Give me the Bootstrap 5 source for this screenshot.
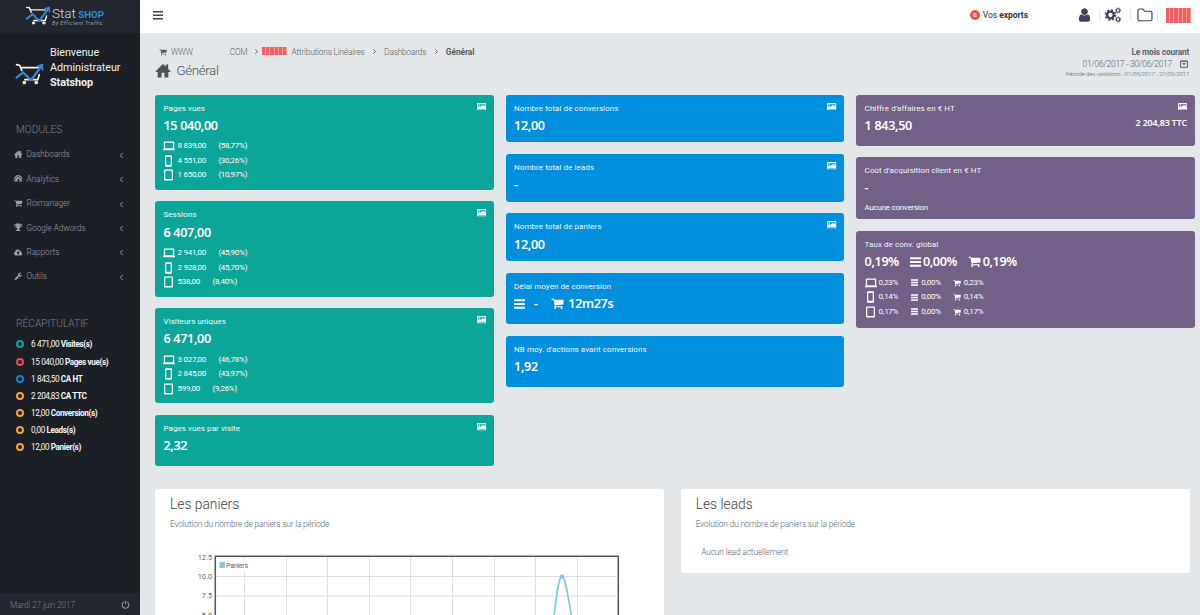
<!DOCTYPE html>
<html lang="fr">
<head>
<meta charset="utf-8">
<meta name="viewport" content="width=device-width, initial-scale=1">
<title>StatShop - Général</title>
<link href="https://cdn.jsdelivr.net/npm/bootstrap@5.3.0/dist/css/bootstrap.min.css" rel="stylesheet">
<style>
body{font-family:Roboto,"Liberation Sans",sans-serif;font-size:8px;line-height:12px;background:#e4e7ea;color:#58666e;height:615px;overflow:hidden}
svg{display:block;flex:none;fill:currentColor}
.shell{height:615px}
/* sidebar */
.side{width:140.3px;background:#1c1f26;color:#8b91a0;flex:none}
.brand{height:33px;background:#22262f;padding:6px 0 0 25px}
.brand-name{color:#d8dade;font-size:13.5px;line-height:14px;font-weight:300;margin-left:1px}
.brand-name b{color:#3788d0;font-size:9.7px;font-weight:700;margin-left:-1px}
.brand-tag{font-size:5.6px;line-height:5px;font-style:italic;color:#9a9ea4;letter-spacing:.34px;margin-left:1px;margin-top:-1px}
.welcome{height:90px;padding:12px 0 0 15px;color:#eef0f2;font-size:10.8px;line-height:15px}
.welcome>div{margin-left:6px;letter-spacing:-.05px}
.side-title{font-size:10.2px;line-height:14px;font-weight:300;color:#7d828d;padding-left:16px}
.recap-title{margin-top:28.3px;margin-bottom:5px}
.modules{margin-top:5px}
.side-link{height:24.45px;padding:0 16px 0 14px;color:#969cab;font-size:8.3px;letter-spacing:-.08px;text-decoration:none}
.side-link .txt{margin-left:4px}
.side-link svg:last-child{margin-top:2px}
.recap{height:17.1px;padding-left:15.600px;color:#f4f5f6;font-size:8.2px;letter-spacing:-.4px}
.ring{width:8px;height:8px;border:2px solid;border-radius:50%;margin-right:7.5px}
.side-foot{height:22px;background:#22262f;color:#7d8493;font-size:8.3px;letter-spacing:-.13px;padding:1px 10.500px 0 10px}
/* top bar */
.topbar{height:33px;background:#fff;color:#3c4456;padding:0 9px 3px 13px}
.exports{font-size:8.5px;color:#333;margin-right:50px;letter-spacing:-.03px}
.pill{width:10.5px;height:10.5px;border-radius:50%;background:#ee4f52;color:#fff;font-size:6px;line-height:10.5px;text-align:center;margin-right:2.5px;font-weight:700}
.vsep{width:1px;height:10px;background:#e4e6e8}
.hatch{background:repeating-linear-gradient(90deg,#f15f60 0 3.2px,#f79a98 3.2px 4.2px)}
.hatch-lg{width:25px;height:15px}
.hatch-sm{width:25px;height:8px;margin-bottom:2px}
.folder{margin-left:6px}
/* page head */
.page{padding:0 5px 0 14.7px}
.page-head{height:61.7px}
.crumbs{height:12px;font-size:8.3px;color:#555d64;font-weight:300;margin-top:8.700px;letter-spacing:-.17px}
.c-www{width:57px}.c-com{width:20px}.c-arrow{margin:0 3.500px 0 6px}.c-wide{margin:0 7px 0 7.5px}
.crumbs b{font-weight:700;letter-spacing:-.02px}
.heading{font-size:13.4px;line-height:18px;font-weight:300;color:#4c5257;margin-top:4px;letter-spacing:-.4px}
.heading svg{margin-right:5.500px}
.period{font-size:8.4px;text-align:right;padding:12.8px 6px 0 0;letter-spacing:-.02px}
.period .fw-bold{letter-spacing:-.18px;margin-right:-.18px}
.p-dates{font-weight:300;letter-spacing:-.2px}
.p-dates svg{margin:0 1px 0 8px}
.p-var{font-size:6px;font-weight:300;line-height:9px;letter-spacing:-.13px;margin-top:-1px}
/* indicators */
.cols{gap:11.7px}
.kpi-col{gap:11.6px;flex:1 1 0}
.kpi{color:#fff;border-radius:3px;padding:8px 8px 0 8.500px;position:relative}
.teal{background:#0ca698}.blue{background:#008fdc}.plum{background:#736086}
.kpi-label{font-size:8px;line-height:12.5px;letter-spacing:.07px;opacity:.95}
.kpi-value{font:600 12.6px/17px "Open Sans","Noto Sans",sans-serif;margin-top:1.700px;height:17px;letter-spacing:-.33px;-webkit-text-stroke:.1px #fff}
.kpi-rows{margin-top:5.2px;font-size:8px;letter-spacing:-.27px}
.kpi-rows>div{height:14.5px}
.dev{width:14px}
.dev-phone{padding-left:2px}
.dev-tablet{padding-left:1px}
.pct{margin-left:12.500px}
.pict{position:absolute;right:7.500px;top:8px}
.dash{margin:0 13.500px 0 9px}
.ttc{font-size:8.8px;position:relative;top:-2px;letter-spacing:-.1px}
.note{font-size:7.9px;letter-spacing:-.22px;margin-top:5.5px}
.g1{margin:0 2px 0 11px}.g2{margin:0 2px 0 10.500px}.cv1{margin:0 3px 0 12.500px}.cv2{margin:0 3px 0 12px}
/* panels */
.panels{padding:0 0 0 14.7px;gap:16.7px;margin-top:23px}
.panel{width:509px;background:#fff;border-radius:3px;padding:6.5px 15px}
.panel h2{font-size:13.8px;line-height:16px;font-weight:300;color:#444;margin:0}
.panel p{font-size:8.35px;font-weight:300;line-height:12px;margin:6px 0 0;letter-spacing:-.16px}
.panel .empty-note{margin:16.5px 0 0 5.5px;letter-spacing:-.13px}
.p-left{height:130px}.p-right{height:83.5px}
.graph{margin-top:9.500px}
</style>
</head>
<body>
<svg class="d-none">
<symbol id="cart" viewBox="0 0 1792 1792"><path d="M704 1536q0 52-38 90t-90 38-90-38-38-90 38-90 90-38 90 38 38 90zm896 0q0 52-38 90t-90 38-90-38-38-90 38-90 90-38 90 38 38 90zm128-1088v512q0 24-16.5 42.5t-40.5 21.5l-1044 122q13 60 13 70 0 16-24 64h920q26 0 45 19t19 45-19 45-45 19h-1024q-26 0-45-19t-19-45q0-11 8-31.5t16-36 21.5-40 15.5-29.5l-177-823h-204q-26 0-45-19t-19-45 19-45 45-19h256q16 0 28.5 6.5t19.5 15.5 13 24.5 8 26 5.5 29.5 4.5 26h1201q26 0 45 19t19 45z"/></symbol>
<symbol id="wrench" viewBox="0 0 1792 1792"><path d="M448 1472q0-26-19-45t-45-19-45 19-19 45 19 45 45 19 45-19 19-45zm644-420l-682 682q-37 37-90 37-52 0-91-37l-106-108q-38-36-38-90 0-53 38-91l681-681q39 98 114.5 173.5t173.5 114.5zm634-435q0 39-23 106-47 134-164.5 217.5t-258.5 83.5q-185 0-316.5-131.5t-131.5-316.5 131.5-316.5 316.5-131.5q58 0 121.5 16.5t107.5 46.5q16 11 16 28t-16 28l-293 169v224l193 107q5-3 79-48.5t135.5-81 70.5-35.5q15 0 23.5 10t8.5 25z"/></symbol>
<symbol id="user" viewBox="200 100 1392 1600"><path d="M1536 1399q0 109-62.5 187t-150.5 78h-854q-88 0-150.5-78t-62.5-187q0-85 8.5-160.5t31.5-152 58.5-131 94-89 134.5-34.5q131 128 313 128t313-128q76 0 134.5 34.5t94 89 58.5 131 31.5 152 8.500 160.5zm-256-887q0 159-112.5 271.5t-271.5 112.5-271.5-112.5-112.5-271.5 112.5-271.5 271.5-112.5 271.5 112.5 112.5 271.5z"/></symbol>
<symbol id="home" viewBox="0 0 16 16"><path d="M8 1 0 8.800l.6.8H2.300V15.500h4.200V10.500h3v5h4.200V9.600h1.700l.6-.8-2.500-2.500V1.500h-2.500v2.300z"/></symbol>
<symbol id="tacho" viewBox="0 0 16 16"><path fill-rule="evenodd" d="M8 2a8 8 0 0 0-8 8c0 1.600.5 3 1.200 4.200h13.600A8 8 0 0 0 8 2zM8 3.300a1.200 1.200 0 1 1 0 2.400 1.200 1.200 0 0 1 0-2.400zM4 5a1.200 1.200 0 1 1 0 2.400A1.200 1.200 0 0 1 4 5zm8 0a1.200 1.200 0 1 1 0 2.400A1.200 1.200 0 0 1 12 5zM2.300 9a1.200 1.200 0 1 1 0 2.400 1.200 1.200 0 0 1 0-2.400zm11.400 0a1.200 1.200 0 1 1 0 2.400 1.200 1.200 0 0 1 0-2.400zM9.300 6.500l1 .3-.9 3.600a1.900 1.900 0 1 1-1-.3z"/></symbol>
<symbol id="trophy" viewBox="0 0 16 16"><path fill-rule="evenodd" d="M4 1h8v1.500h3.500V5c0 2-2 3.500-4.300 3.800-.7.900-1.500 1.200-1.700 2.400 0 1 .8 1.300 2.500 1.800v2H4v-2c1.700-.5 2.500-.8 2.500-1.800-.2-1.200-1-1.500-1.700-2.400C2.500 8.500.5 7 .5 5V2.500H4zM4 4H2v1c0 1 .9 2 2.300 2.400C4 6.400 4 5.200 4 4zm8 0c0 1.200 0 2.400-.3 3.400C13.100 7 14 6 14 5V4z"/></symbol>
<symbol id="cloud" viewBox="0 0 16 16"><path fill-rule="evenodd" d="M3.500 14A3.500 3.500 0 0 1 2 7.300 4.600 4.600 0 0 1 10.500 5 2.500 2.500 0 0 1 13.500 8 3.100 3.100 0 0 1 13 14zM8 6 4.800 9.500h2V12h2.400V9.500h2z"/></symbol>
<symbol id="bars" viewBox="0 0 11 10"><path d="M0 .3h11v2H0zM0 4h11v2H0zM0 7.700h11v2H0z"/></symbol>
<symbol id="laptop" viewBox="0 0 12 10"><path fill-rule="evenodd" d="M1.500.5h9a.7.700 0 0 1 .7.700v6.500H12V9.300H0V7.700h.8V1.200a.7.700 0 0 1 .7-.7zM2.100 1.800v5.400h7.800V1.800z"/></symbol>
<symbol id="phone" viewBox="0 0 7 12"><path fill-rule="evenodd" d="M.8.200h5.400a.7.700 0 0 1 .7.700v10.200a.7.700 0 0 1-.7.700H.8a.7.700 0 0 1-.7-.7V.9A.7.700 0 0 1 .8.200zM1.300 2v7.700h4.400V2z"/></symbol>
<symbol id="tablet" viewBox="0 0 9 12"><path fill-rule="evenodd" d="M.9.400h7.200a.8.800 0 0 1 .8.800v9.600a.8.800 0 0 1-.8.800H.9a.8.800 0 0 1-.8-.8V1.200A.8.800 0 0 1 .9.400zM1.300 1.700v8.300h6.400V1.700z"/></symbol>
<symbol id="photo" viewBox="0 0 10 8"><path opacity=".93" fill-rule="evenodd" d="M.5 0h9a.5.500 0 0 1 .5.500v7a.5.500 0 0 1-.5.500h-9a.5.500 0 0 1-.5-.5v-7A.5.500 0 0 1 .5 0zM1.200 1.200v3.200l1.400-1.200 1 .8 2-2 1 1 .8-.8 1.400 1.200V1.200zM2.700 1.500a.7.700 0 1 1 0 1.400.7.700 0 0 1 0-1.400zM1.300 6.300v.5h7.400v-.5z"/></symbol>
<symbol id="left" viewBox="0 0 5 7"><path d="M3.700 1 1.300 3.500 3.700 6" fill="none" stroke="currentColor" stroke-width="1"/></symbol>
<symbol id="right" viewBox="0 0 5 7"><path d="M1.300 1.300 3.500 3.500 1.300 5.700" fill="none" stroke="currentColor" stroke-width=".9"/></symbol>
<symbol id="logo" viewBox="0 0 28 21"><g fill="none" stroke-linecap="round" stroke-linejoin="round"><path d="M1.500 1.500 4.500 2l2 5M6.500 4.300h16M9.500 16h12.500l1.500-5" stroke="#f4f5f6" stroke-width="1.600"/><circle cx="9" cy="18.700" r="1.300" fill="#f4f5f6" stroke="#f4f5f6"/><circle cx="20.500" cy="18.700" r="1.300" fill="#f4f5f6" stroke="#f4f5f6"/><path d="m1.500 14 6.500-5 7.500 7.500L25.500 3" stroke="#3d85c9" stroke-width="2.200"/><path d="m21.500 3.300 4.800-1.800.3 5" stroke="#3d85c9" stroke-width="1.700"/></g></symbol>
</svg>

<div class="shell d-flex">
<aside class="side d-flex flex-column">
  <div class="brand d-flex">
    <svg width="26" height="19"><use href="#logo"/></svg>
    <div class="text-nowrap"><div class="brand-name">Stat <b>SHOP</b></div><div class="brand-tag">By Efficient Traffic</div></div>
  </div>
  <div class="welcome d-flex">
    <svg class="mt-3" width="29" height="26"><use href="#logo"/></svg>
    <div>Bienvenue<br>Administrateur<br><b>Statshop</b></div>
  </div>
  <div class="side-title">MODULES</div>
  <nav class="modules" id="modules"></nav>
  <div class="side-title recap-title">RÉCAPITULATIF</div>
  <div id="recap"></div>
  <div class="side-foot mt-auto d-flex align-items-center justify-content-between fw-light">Mardi 27 juin 2017
    <svg width="9" height="9" viewBox="0 0 10 10"><path d="M3 2.300a3.700 3.700 0 1 0 4 0M5 .8v4" fill="none" stroke="#9298a5" stroke-width="1.200"/></svg>
  </div>
</aside>

<div class="flex-grow-1">
<header class="topbar d-flex align-items-center">
  <svg width="10" height="9" viewBox="0 0 10 9"><path d="M0 0h10v1.500H0zM0 3.500h10V5H0zM0 7h10v1.500H0z"/></svg>
  <div class="exports ms-auto d-flex align-items-center"><span class="pill">0</span><span>Vos <b>exports</b></span></div>
  <svg width="13" height="14"><use href="#user"/></svg>
  <i class="vsep ms-2 me-1"></i>
  <svg width="18" height="16" viewBox="0 0 17 16"><g fill="none" stroke="#3c4456">
    <circle cx="6" cy="8" r="3.300" stroke-width="2.300"/><circle cx="6" cy="8" r="5" stroke-width="1.600" stroke-dasharray="2 1.927"/>
    <circle cx="13.600" cy="3.500" r="1.700" stroke-width="1.100"/><circle cx="13.600" cy="3.500" r="2.600" stroke-width=".9" stroke-dasharray="1.020 1.022"/>
    <circle cx="13.600" cy="12.500" r="1.700" stroke-width="1.100"/><circle cx="13.600" cy="12.500" r="2.600" stroke-width=".9" stroke-dasharray="1.020 1.022"/></g>
  </svg>
  <i class="vsep ms-2"></i>
  <svg class="folder" width="16" height="14" viewBox="0 0 16 14"><path d="M1 2.500Q1 1 2.500 1h3Q7 1 7 2.500q0 .7.700.7h5.800q1.500 0 1.500 1.500v6.500q0 1.500-1.500 1.500h-11Q1 12.700 1 11.200z" fill="none" stroke="#3c4456" stroke-width="1.150"/></svg>
  <i class="vsep ms-1 me-2"></i>
  <span class="hatch hatch-lg"></span>
</header>

<main class="page">
  <div class="page-head d-flex justify-content-between">
    <div class="pt-1">
      <div class="crumbs d-flex align-items-center">
        <svg class="ms-1" width="8" height="8"><use href="#cart"/></svg><span class="ms-1 c-www">WWW.</span><span class="c-com">.COM</span>
        <svg class="c-arrow" width="5" height="7"><use href="#right"/></svg><span class="hatch hatch-sm"></span><span class="ms-1">Attributions Linéaires</span>
        <svg class="c-wide" width="5" height="7"><use href="#right"/></svg><span>Dashboards</span>
        <svg class="c-wide" width="5" height="7"><use href="#right"/></svg><b>Général</b>
      </div>
      <div class="heading d-flex align-items-center"><svg width="16" height="15"><use href="#home"/></svg><span>Général</span></div>
    </div>
    <div class="period">
      <div class="fw-bold">Le mois courant</div>
      <div class="d-flex justify-content-end align-items-center p-dates">01/06/2017 - 30/06/2017 <svg width="8" height="8" viewBox="0 0 8 8"><path d="M.6 1h6.800v6.300H.6zM.6 1.300h6.800" fill="none" stroke="#5a626a"/><path d="M2.200 3h3.600L4 5.500z"/></svg></div>
      <div class="p-var">Période des variations : 01/05/2017 - 27/05/2017</div>
    </div>
  </div>
  <div class="cols d-flex align-items-start" id="cols"></div>
</main>
<section class="panels d-flex align-items-start">
  <div class="panel p-left">
    <h2>Les paniers</h2><p>Evolution du nombre de paniers sur la période</p>
    <svg class="graph" width="480" height="80" viewBox="170 540 480 80" font-size="7.300" fill="#666">
      <path d="M244.500 557v60M286.500 557v60M327.500 557v60M369.500 557v60M410.500 557v60M452.500 557v60M494.500 557v60M535.500 557v60M577.500 557v60M216 577.500h401M216 597h401" stroke="#dedede" fill="none"/>
      <path d="M553 625C557 592 559 577 562 577S567 592 573 625" stroke="#8dc5d8" stroke-width="1.700" fill="none"/><circle cx="562" cy="577.500" r="2.300" fill="#8dc5d8"/>
      <path d="M215.300 622V557.300h403V622" stroke="#545454" stroke-width="1.500" fill="none"/>
      <rect x="219" y="560" width="29" height="12" fill="#fff"/><rect x="219.500" y="563" width="5.500" height="6" fill="#8dc5d8"/><text x="226" y="568.800" textLength="22" font-size="7">Paniers</text>
      <g text-anchor="end"><text x="212" y="560.500">12.5</text><text x="212" y="579.800">10.0</text><text x="212" y="599.300">7.5</text><text x="212" y="618.800">5.0</text></g>
    </svg>
  </div>
  <div class="panel p-right"><h2>Les leads</h2><p>Evolution du nombre de paniers sur la période</p><p class="empty-note">Aucun lead actuellement</p></div>
</section>
</div>
</div>
<script src="https://cdn.jsdelivr.net/npm/bootstrap@5.3.0/dist/js/bootstrap.bundle.min.js"></script>
<script>
const ico=(n,w,h=w,c='')=>`<svg class="${c}" width="${w}" height="${h}"><use href="#${n}"/></svg>`;
document.getElementById('modules').innerHTML=[['home','Dashboards'],['tacho','Analytics'],['cart','Roimanager'],['trophy','Google Adwords'],['cloud','Rapports'],['wrench','Outils']]
 .map(([i,t])=>`<a class="side-link d-flex align-items-center">${ico(i,8.5)}<span class="txt fw-light">${t}</span>${ico('left',5,7,'ms-auto')}</a>`).join('');
document.getElementById('recap').innerHTML=[['#0ca698','6 471,00','Visites(s)'],['#e0515c','15 040,00','Pages vue(s)'],['#1083cb','1 843,50','CA HT'],['#eda54b','2 204,83','CA TTC'],['#eda54b','12,00','Conversion(s)'],['#eda54b','0,00','Leads(s)'],['#eda54b','12,00','Panier(s)']]
 .map(([c,n,t])=>`<div class="recap d-flex align-items-center"><i class="ring" style="border-color:${c}"></i><span>${n} <b>${t}</b></span></div>`).join('');
const devs=[['laptop',12,10],['phone',7,12],['tablet',9,12]];
const dev=i=>`<span class="dev d-flex dev-${devs[i][0]}">${ico(...devs[i])}</span>`;
const rows=r=>`<div class="kpi-rows">${r.map((x,i)=>`<div class="d-flex align-items-center">${dev(i)}<span>${x[0]}</span><span class="pct">${x[1]}</span></div>`).join('')}</div>`;
const convRows=`<div class="kpi-rows">${['0,23%','0,14%','0,17%'].map((x,i)=>`<div class="d-flex align-items-center">${dev(i)}<span>${x}</span>${ico('bars',7.5,7,'cv1')}<span>0,00%</span>${ico('cart',8,8,'cv2')}<span>${x}</span></div>`).join('')}</div>`;
const card=(cls,h,label,val,extra='',pict=true)=>`<article class="kpi ${cls}" style="height:${h}px">${pict?ico('photo',9.5,7.5,'pict'):''}<div class="kpi-label">${label}</div><div class="kpi-value d-flex align-items-center">${val}</div>${extra}</article>`;
const col=a=>`<div class="kpi-col d-flex flex-column">${a.join('')}</div>`;
document.getElementById('cols').innerHTML=
col([card('teal',95.2,'Pages vues','15 040,00',rows([['8 839,00','(58,77%)'],['4 551,00','(30,26%)'],['1 650,00','(10,97%)']])),
 card('teal',95.2,'Sessions','6 407,00',rows([['2 941,00','(45,90%)'],['2 928,00','(45,70%)'],['538,00','(8,40%)']])),
 card('teal',95.2,'Visiteurs uniques','6 471,00',rows([['3 027,00','(46,78%)'],['2 845,00','(43,97%)'],['599,00','(9,26%)']])),
 card('teal',51,'Pages vues par visite','2,32')])+
col([card('blue',47.8,'Nombre total de conversions','12,00'),card('blue',47.8,'Nombre total de leads','-'),card('blue',47.8,'Nombre total de paniers','12,00'),
 card('blue',51.2,'Délai moyen de conversion',ico('bars',11,10)+'<span class="dash">-</span>'+ico('cart',13)+'<span class="ms-1">12m27s</span>','',false),
 card('blue',51.2,"NB moy. d'actions avant conversions",'1,92','',false)])+
col([card('plum',51,"Chiffre d'affaires en € HT",'1 843,50<span class="ttc ms-auto">2 204,83 TTC</span>'),
 card('plum',62,"Coût d'acquisition client en € HT",'-','<div class="note">Aucune conversion</div>',false),
 card('plum',97,'Taux de conv. global','<span>0,19%</span>'+ico('bars',11,10,'g1')+'<span>0,00%</span>'+ico('cart',13,13,'g2')+'<span>0,19%</span>',convRows,false)]);
</script>
</body>
</html>
